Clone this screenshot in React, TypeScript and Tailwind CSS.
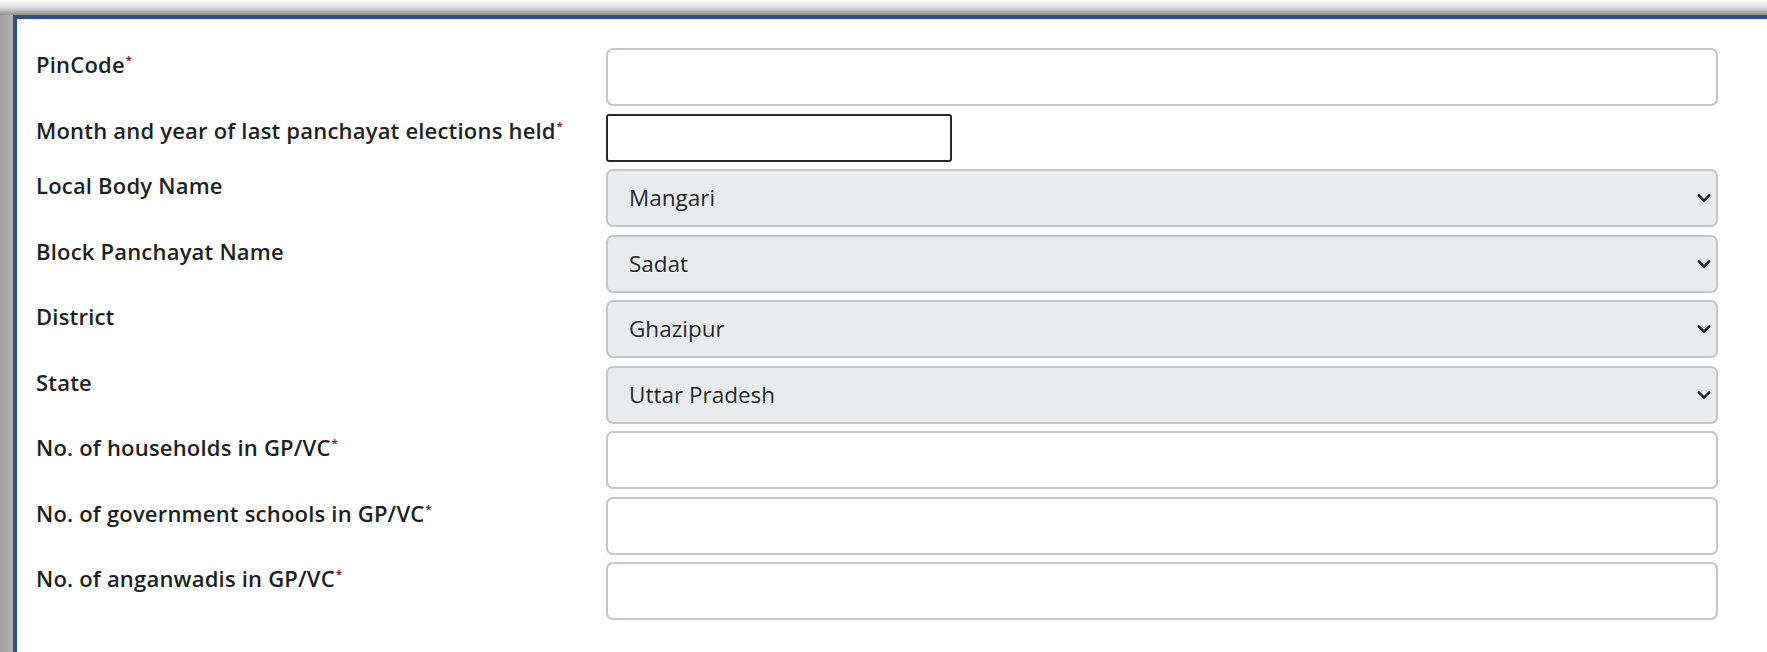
import type { ReactNode } from 'react';

type Field =
  | { label: string; required?: boolean; kind: 'text' }
  | { label: string; required?: boolean; kind: 'month' }
  | { label: string; required?: boolean; kind: 'select'; value: string };

const fields: Field[] = [
  { label: 'PinCode', required: true, kind: 'text' },
  { label: 'Month and year of last panchayat elections held', required: true, kind: 'month' },
  { label: 'Local Body Name', kind: 'select', value: 'Mangari' },
  { label: 'Block Panchayat Name', kind: 'select', value: 'Sadat' },
  { label: 'District', kind: 'select', value: 'Ghazipur' },
  { label: 'State', kind: 'select', value: 'Uttar Pradesh' },
  { label: 'No. of households in GP/VC', required: true, kind: 'text' },
  { label: 'No. of government schools in GP/VC', required: true, kind: 'text' },
  { label: 'No. of anganwadis in GP/VC', required: true, kind: 'text' },
];

function Chevron() {
  return (
    <svg
      viewBox="0 0 16 10"
      className="pointer-events-none absolute right-[7px] top-1/2 h-[9px] w-[14px] -translate-y-1/2"
      fill="none"
      stroke="#1f2326"
      strokeWidth={2.8}
      strokeLinecap="round"
      strokeLinejoin="round"
    >
      <path d="M2 2l6 6 6-6" />
    </svg>
  );
}

function Label({ children, required }: { children: ReactNode; required?: boolean }) {
  return (
    <div className="pt-[3px] text-[22px] leading-[26px] tracking-[0.2px] font-semibold text-[#1c1f23]">
      {children}
      {required && (
        <span className="relative -top-[9px] ml-[1px] text-[11px] font-bold text-[#8e1b1f]">*</span>
      )}
    </div>
  );
}

function Control({ field }: { field: Field }) {
  if (field.kind === 'month') {
    return (
      <input
        type="text"
        className="h-[48px] w-[346px] rounded-[3px] border-2 border-[#26282b] bg-white outline-none"
      />
    );
  }
  if (field.kind === 'select') {
    return (
      <div className="relative h-[58px]">
        <select
          defaultValue={field.value}
          className="h-full w-full appearance-none rounded-[7px] border-2 border-[#c3c7cb] bg-[#e9ecef] pl-[21px] text-[22.5px] text-[#212529] outline-none [text-shadow:0_0_2px_#fff]"
        >
          <option value={field.value}>{field.value}</option>
        </select>
        <Chevron />
      </div>
    );
  }
  return (
    <input
      type="text"
      className="h-[58px] w-full rounded-[7px] border-2 border-[#c3c7cb] bg-white outline-none"
    />
  );
}

export default function App() {
  return (
    <div className="h-[652px] w-full overflow-hidden bg-[#a6a6a6] font-['Open_Sans','Noto_Sans',sans-serif]">
      {/* window shadow along the top edge */}
      <div className="h-[15px] bg-gradient-to-b from-[#fcfcfc] via-[#dedede] to-[#8f8f8f]" />
      <div className="flex h-[637px]">
        <div className="w-[13px] shrink-0 bg-gradient-to-r from-[#a2a2a2] to-[#b0b0b0]" />
        <div className="flex-1 border-l-4 border-t-4 border-[#28528a] bg-white pl-[19px] pr-[49px] pt-[29px]">
          <div className="grid grid-cols-[570px_1fr] gap-y-[7.5px]">
            {fields.map((f) => (
              <div key={f.label} className="contents">
                <Label required={f.required}>{f.label}</Label>
                <Control field={f} />
              </div>
            ))}
          </div>
        </div>
      </div>
    </div>
  );
}
